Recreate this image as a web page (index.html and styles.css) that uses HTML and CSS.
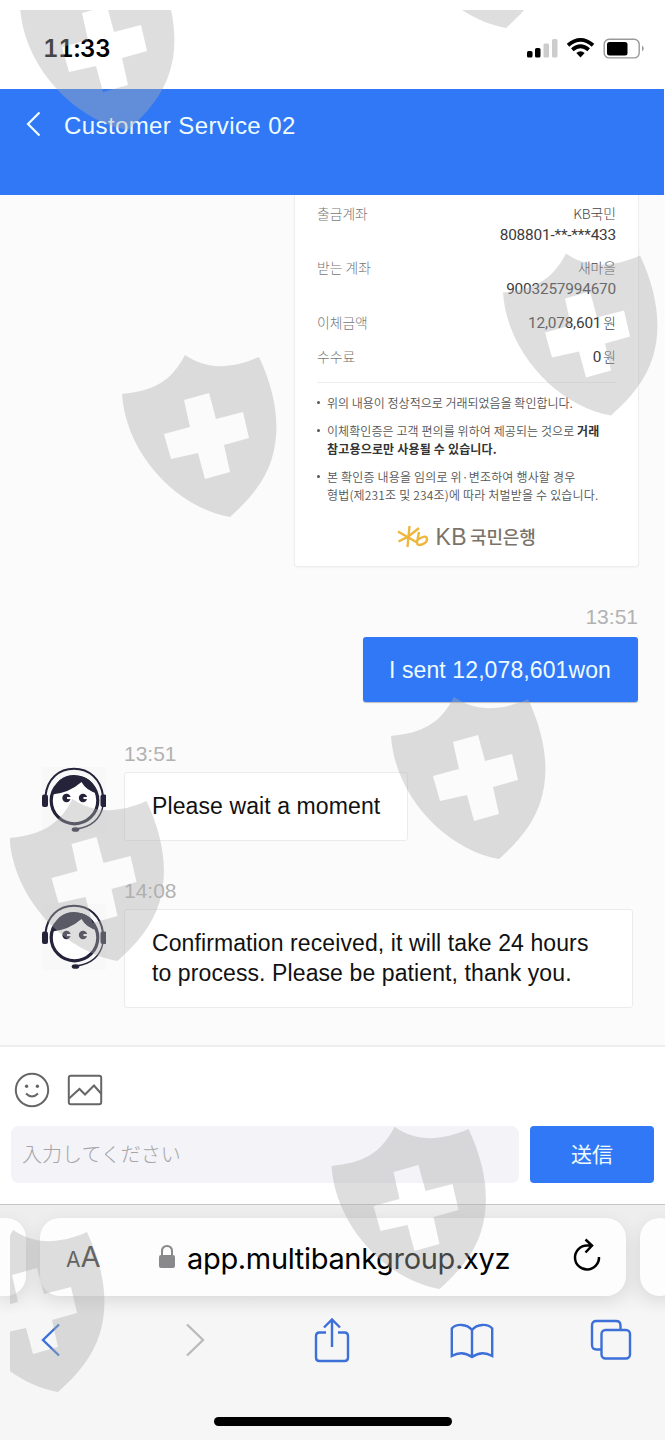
FILE: index.html
```html
<!DOCTYPE html>
<html lang="en">
<head>
<meta charset="utf-8">
<title>Customer Service 02</title>
<link rel="stylesheet" href="styles.css">
</head>
<body>
<div class="screen">
  <div class="status">
    <span class="clock">11:33</span>
    <svg class="status-icons" width="120" height="24" viewBox="0 0 120 24">
      <rect x="1" y="14" width="5.5" height="6.5" rx="1.5"/>
      <rect x="9" y="11" width="5.5" height="9.500" rx="1.5"/>
      <rect class="dim" x="17.500" y="6.500" width="5.500" height="14" rx="1.500"/>
      <rect class="dim" x="26" y="2" width="5.500" height="18.500" rx="1.500"/>
      <g class="wifi"><path d="M42 8.200Q54.500 -2.400 67 8.200"/><path d="M46.300 12.800Q54.500 5.700 62.700 12.800"/></g>
      <path d="M50.300 16Q54.500 12.600 58.700 16L54.500 20.500Z"/>
      <rect class="battery" x="78.200" y="2.300" width="35" height="18.600" rx="5"/>
      <rect x="81" y="5" width="20.500" height="13.500" rx="2.500"/>
      <path class="cap" d="M116 8.500Q119.500 11.500 116 14.500Z"/>
    </svg>
  </div>
  <header class="header">
    <svg width="16" height="26" viewBox="0 0 16 26"><path d="M13.500 1.500L2 13L13.500 24.500"/></svg>
    <h1 class="title">Customer Service 02</h1>
  </header>
  <main class="chat">
    <section class="receipt">
      <div class="row row-account"><span>출금계좌</span><span class="value">KB국민<br><b class="num">808801-**-***433</b></span></div>
      <div class="row row-account"><span>받는 계좌</span><span class="value">새마을<br><b class="num">9003257994670</b></span></div>
      <div class="row row-amount"><span>이체금액</span><span class="value"><b class="num">12,078,601</b><span class="won">원</span></span></div>
      <div class="row row-fee"><span>수수료</span><span class="value"><b class="num">0</b><span class="won">원</span></span></div>
      <ul class="notes">
        <li>위의 내용이 정상적으로 거래되었음을 확인합니다.</li>
        <li class="wide">이체확인증은 고객 편의를 위하여 제공되는 것으로 <strong>거래</strong><br><strong class="wider">참고용으로만 사용될 수 있습니다.</strong></li>
        <li class="wider">본 확인증 내용을 임의로 위·변조하여 행사할 경우<br>형법(제231조 및 234조)에 따라 처벌받을 수 있습니다.</li>
      </ul>
      <div class="bank">
        <svg width="33" height="24" viewBox="0 0 33 24"><path d="M12.500 1L10.500 22M1 6.500L20 17.500M1.500 16.500L11.500 11.500L22 3M22 7L20 17.500Q20 21 25 19.500Q32 16.500 29.500 12.500Q27.500 10 20.500 15"/></svg>
        <span class="bank-kb">KB</span><span class="bank-name">국민은행</span>
      </div>
    </section>
    <time class="time time-out">13:51</time>
    <p class="bubble bubble-out">I sent 12,078,601won</p>
    <article class="incoming">
      <svg class="avatar" width="64" height="66" viewBox="0 0 64 66">
        <path class="headphones" d="M3.500 29C5 12 17 1.800 32 1.800S59 12 61 29"/><circle class="face" cx="32.500" cy="33.500" r="23.300"/>
        <path class="hair" d="M10 27.500Q15 8 32 8Q51 9 55.500 26.500Q44 23.500 39.500 15Q27 26 10 27.500Z"/>
        <rect x="0" y="27.500" width="6" height="12.500" rx="2"/><rect x="58.500" y="27.500" width="6" height="12.500" rx="2"/>
        <circle cx="24.500" cy="31" r="4.200"/><circle cx="41" cy="31" r="4.200"/>
        <path class="glint" d="M25 30L30 30V32.200L25 32ZM41.500 30L46 30V32.200L41.500 32Z"/>
        <path class="mic" d="M61 39Q57 59 34 62"/><ellipse cx="33.500" cy="62.500" rx="3.800" ry="2.300"/>
      </svg>
      <div class="message"><time class="time">13:51</time><p class="bubble bubble-in bubble-short">Please wait a moment</p></div>
    </article>
    <article class="incoming">
      <svg class="avatar" width="64" height="66" viewBox="0 0 64 66">
        <path class="headphones" d="M3.500 29C5 12 17 1.800 32 1.800S59 12 61 29"/><circle class="face" cx="32.500" cy="33.500" r="23.300"/>
        <path class="hair" d="M10 27.500Q15 8 32 8Q51 9 55.500 26.500Q44 23.500 39.500 15Q27 26 10 27.500Z"/>
        <rect x="0" y="27.500" width="6" height="12.500" rx="2"/><rect x="58.500" y="27.500" width="6" height="12.500" rx="2"/>
        <circle cx="24.500" cy="31" r="4.200"/><circle cx="41" cy="31" r="4.200"/>
        <path class="glint" d="M25 30L30 30V32.200L25 32ZM41.500 30L46 30V32.200L41.500 32Z"/>
        <path class="mic" d="M61 39Q57 59 34 62"/><ellipse cx="33.500" cy="62.500" rx="3.800" ry="2.300"/>
      </svg>
      <div class="message"><time class="time">14:08</time><p class="bubble bubble-in bubble-long">Confirmation received, it will take 24 hours<br>to process. Please be patient, thank you.</p></div>
    </article>
  </main>
  <section class="composer">
    <div class="tools">
      <svg width="36" height="36" viewBox="0 0 36 36"><circle cx="18" cy="18" r="16.200"/><path d="M12 21.500Q18 27.500 24 21.500"/><circle class="dot" cx="12.600" cy="14.300" r="1.700"/><circle class="dot" cx="23.400" cy="14.300" r="1.700"/></svg>
      <svg width="36" height="36" viewBox="0 0 36 36"><rect x="1.800" y="3.800" width="32.400" height="28.400" rx="2"/><path d="M2 26.500L12.500 17L18 22.500L27 13.500L34 21.500"/></svg>
    </div>
    <div class="entry"><div class="field">入力してください</div><div class="send">送信</div></div>
  </section>
  <footer class="browser">
    <div class="tabs">
      <div class="pill pill-left"></div>
      <div class="pill address">
        <span class="aa"><small>A</small>A</span>
        <svg class="lock" width="18" height="26" viewBox="0 0 18 26"><rect x="1" y="11" width="16" height="13" rx="2"/><path d="M4 12V7.500Q4 2 9 2T14 7.500V12"/></svg>
        <span class="url">app.multibankgroup.xyz</span>
        <svg class="reload" width="30" height="34" viewBox="0 0 30 34"><path d="M19.500 7.500H15A12 12 0 1 0 27 19M13.500 1.500L20 7.500L13.500 14.500"/></svg>
      </div>
      <div class="pill pill-right"></div>
    </div>
    <nav class="nav">
      <svg width="20" height="34" viewBox="0 0 20 34"><path d="M18 1.500L2 17L18 32.500"/></svg>
      <svg class="off" width="20" height="34" viewBox="0 0 20 34"><path d="M2 1.500L18 17L2 32.500"/></svg>
      <svg class="share" width="36" height="46" viewBox="0 0 36 46"><path d="M12 15.500H5.500Q2 15.500 2 19V40.500Q2 44 5.500 44H30.500Q34 44 34 40.500V19Q34 15.500 30.500 15.500H24M18 30V3M10 10.500L18 2.500L26 10.500"/></svg>
      <svg class="book" width="44" height="36" viewBox="0 0 44 36"><path d="M22 34V7C17 .5 6 .5 1.800 5.500V33Q12 27 22 34Q32 27 42.200 33V5.500C38 .5 27 .5 22 7"/></svg>
      <svg class="pages" width="42" height="42" viewBox="0 0 42 42"><rect x="11.500" y="11" width="28.500" height="28.500" rx="4"/><path d="M11 30.500H6.500Q2 30.500 2 26V6.500Q2 2 6.500 2H26Q30.500 2 30.500 6.500V10.500"/></svg>
    </nav>
    <div class="home"></div>
  </footer>
  <svg class="shields" width="655" height="1430" viewBox="10 10 655 1430">
    <defs><path id="shield" fill-rule="evenodd" d="M12 54C43 51 61 42 75 15C95 29 120 30 149 17C166 53 171 88 162 118C155 142 138 161 120 177C68 168 16 115 12 54ZM74 60L99 53L106 79L133 72L139 98L114 105L120 132L95 139L88 113L61 119L54 94L80 87Z"/></defs>
    <use href="#shield" x="8" y="-47"/><use href="#shield" x="386" y="-149"/>
    <use href="#shield" x="491" y="238.500"/><use href="#shield" x="110" y="340"/>
    <use href="#shield" x="379" y="682"/><use href="#shield" x="-2.500" y="784"/>
    <use href="#shield" x="319.500" y="1112"/><use href="#shield" x="-62" y="1215"/>
  </svg>
</div>
</body>
</html>
```
FILE: styles.css
```css
* { box-sizing: border-box; }
body { margin: 0; font-family: "Liberation Sans", Arial, sans-serif; }
svg { display: block; flex: none; }
p, h1, ul { margin: 0; padding: 0; }
.screen { position: relative; width: 665px; height: 1440px; overflow: hidden; background: #fff; display: flex; flex-direction: column; }
.screen > * { flex-shrink: 0; }
.shields { position: absolute; left: 10px; top: 10px; fill: rgba(172, 172, 172, .4); pointer-events: none; }

.status { height: 89px; padding: 35px 19px 0 43px; display: flex; justify-content: space-between; }
.clock { font: 600 24px/28px Inter, sans-serif; font-variant-numeric: tabular-nums; letter-spacing: -.2px; }
.status-icons { margin: 2px 0 0; }
.status-icons .dim { fill: #ccc; }
.wifi { fill: none; stroke: #000; stroke-width: 3.8; }
.status-icons .battery { fill: none; stroke: #999; stroke-width: 1.4; }
.cap { fill: #999; }

.header { height: 106px; margin-right: 1px; padding: 22px 26px; display: flex; align-items: flex-start; gap: 22px; background: #3178f6; color: #eefcff; }
.header svg { fill: none; stroke: #eefcff; stroke-width: 2.2; }
.title { margin-top: 1px; font-size: 24px; line-height: 28px; font-weight: 400; letter-spacing: .4px; white-space: nowrap; }

.chat { height: 850px; background: #fbfbfb; padding: 0 26px 0 42px; display: flex; flex-direction: column; }
.receipt { align-self: flex-end; width: 345px; height: 372px; padding: 0 22px; border: 1px solid #eee; border-top: 0; border-radius: 0 0 4px 4px; background: #fff; box-shadow: 0 1px 2px #0000000a; font-family: "Noto Sans CJK KR", sans-serif; color: #555; }
.row { display: flex; justify-content: space-between; font-size: 13.8px; line-height: 21px; color: #777; font-weight: 300; }
.value { text-align: right; color: #444; white-space: nowrap; }
.num { font: 400 15.4px/21px Roboto, sans-serif; letter-spacing: -.2px; color: #3c3c3c; }
.won { margin-left: 2px; }
.row-account { height: 54px; padding-top: 8px; }
.row-amount { height: 35px; padding-top: 9px; }
.row-fee { height: 45px; padding-top: 8px; border-bottom: 1px solid #eee; }
.notes { list-style: none; height: 138px; padding: 11px 0 0 10px; font-size: 12px; line-height: 18px; font-weight: 350; white-space: nowrap; }
.notes li { position: relative; margin-bottom: 10px; }
.notes li::before { content: ""; position: absolute; left: -10px; top: 7px; width: 3px; height: 3px; border-radius: 50%; background: #555; }
.notes strong { color: #333; font-weight: 700; }
.wide { letter-spacing: .08px; }
.wider { letter-spacing: .18px; }
.bank { display: flex; align-items: center; justify-content: center; height: 30px; gap: 5px; margin-top: 1px; color: #7b7369; }
.bank svg { fill: none; stroke: #edb63d; stroke-width: 2.4; }
.bank-kb { font: 400 23px/28px "Liberation Sans", sans-serif; letter-spacing: .5px; }
.bank-name { font-size: 18px; font-weight: 500; line-height: 28px; margin: -3px 0 0 -2px; letter-spacing: -.2px; }

.time { display: block; font-size: 21px; line-height: 24px; color: #b2b2b2; }
.time-out { align-self: flex-end; margin: 38px 1px 0 0; }
.bubble { border-radius: 3px; font-size: 23px; line-height: 30px; letter-spacing: .1px; color: #111; white-space: nowrap; }
.bubble-out { align-self: flex-end; width: 275px; height: 65px; margin: 8px 1px 0 0; padding: 18px 26px; background: #3178f6; color: #eefcff; box-shadow: 0 1px 1px #8888; }
.incoming { display: flex; gap: 18px; margin-top: 40px; }
.incoming + .incoming { margin-top: 38px; }
.avatar { margin-top: 25px; background: #f8f8f8; fill: #24233a; }
.headphones { fill: none; stroke: #24233a; stroke-width: 2; }
.face { fill: #fff; stroke: #24233a; stroke-width: 3.2; }
.glint { fill: #fff; }
.mic { fill: none; stroke: #24233a; stroke-width: 1.3; }
.bubble-in { margin-top: 6px; padding: 18px 27px; background: #fff; border: 1px solid #ebebeb; }
.bubble-short { width: 284px; height: 69px; }
.bubble-long { width: 509px; height: 99px; }

.composer { height: 159px; border-top: 2px solid #eee; padding: 25px 11px 0; background: #fff; }
.tools { display: flex; gap: 17px; padding-left: 3px; }
.tools svg { fill: none; stroke: #666; stroke-width: 2; }
.tools .dot { fill: #666; stroke: none; }
.entry { display: flex; gap: 11px; margin-top: 18px; font-family: "Noto Sans CJK JP", sans-serif; line-height: 55px; height: 57px; }
.field { width: 508px; border-radius: 8px; padding-left: 11px; background: #f3f3f8; color: #a5a5a5; font-size: 20px; font-weight: 300; }
.send { width: 124px; border-radius: 4px; background: #3178f6; color: #eefcff; text-align: center; font-size: 21px; }

.browser { height: 236px; border-top: 1px solid #c6c6c6; background: #f6f6f6; overflow: hidden; }
.tabs { display: flex; gap: 14px; height: 110px; padding-top: 13px; background: linear-gradient(#eee 0, #eee 80px, #f6f6f6 110px); }
.pill { height: 78px; border-radius: 20px; background: #fdfdfd; box-shadow: 0 5px 18px #00000018; flex: none; }
.pill-left { width: 26px; border-radius: 0 20px 20px 0; }
.pill-right { width: 40px; }
.address { width: 586px; display: flex; align-items: center; font-family: Inter, sans-serif; padding-left: 26px; }
.aa { width: 92px; margin-top: 3px; font-size: 29px; line-height: 40px; color: #333; }
.aa small { font-size: 21px; }
.lock { fill: #89898c; }
.lock path { fill: none; stroke: #89898c; stroke-width: 2; }
.url { width: 332px; margin: 3px 0 0 11px; font-size: 29px; line-height: 40px; letter-spacing: -.33px; white-space: nowrap; }
.reload { margin: -4px 0 0 53px; fill: none; stroke: #000; stroke-width: 2.5; }
.nav { display: flex; align-items: center; height: 50px; padding-left: 41px; }
.nav svg { fill: none; stroke: #3c70d8; stroke-width: 2.4; }
.nav svg.off { margin-left: 124px; stroke: #bbb; }
.share { margin-left: 109px; }
.book { margin: 2px 0 0 100px; }
.pages { margin-left: 96px; }
.home { width: 238px; height: 9px; border-radius: 5px; margin: 52px 0 0 214px; background: #000; }
```
